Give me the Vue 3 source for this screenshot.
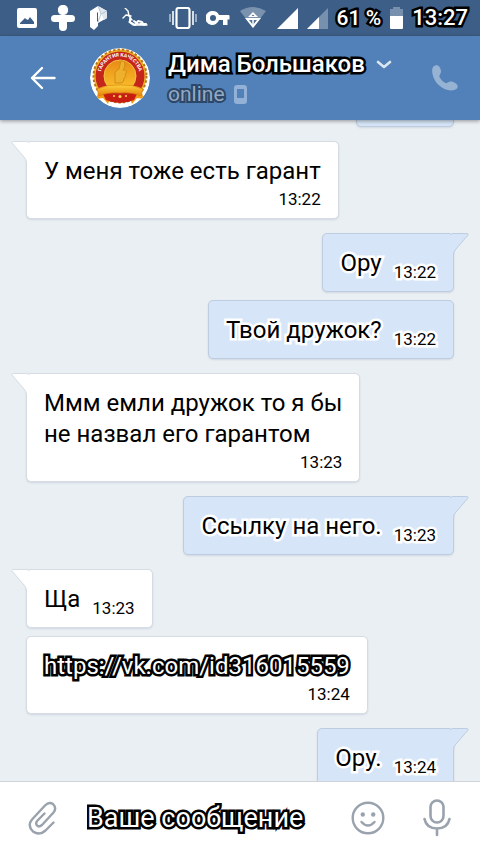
<script setup>
import { ref } from 'vue'

const draft = ref('')

const messages = [
  { id: 2, side: 'in', tail: true, stacked: true, text: 'У меня тоже есть гарант', time: '13:22' },
  { id: 3, side: 'out', tail: true, text: 'Ору', time: '13:22' },
  { id: 4, side: 'out', text: 'Твой дружок?', time: '13:22' },
  { id: 5, side: 'in', tail: true, stacked: true, text: 'Ммм емли дружок то я бы\nне назвал его гарантом', time: '13:23' },
  { id: 6, side: 'out', tail: true, text: 'Ссылку на него.', time: '13:23' },
  { id: 7, side: 'in', tail: true, text: 'Ща', time: '13:23' },
  { id: 8, side: 'in', stacked: true, link: 'https://vk.com/id316015559', time: '13:24' },
  { id: 9, side: 'out', tail: true, text: 'Ору.', time: '13:24' },
]
</script>

<template>
  <div class="page">
    <div class="status">
      <div class="group left">
        <svg width="20" height="20" viewBox="0 0 20 20"><path fill="#fff" fill-rule="evenodd" d="M2 0h16a2 2 0 0 1 2 2v16a2 2 0 0 1-2 2H2a2 2 0 0 1-2-2V2a2 2 0 0 1 2-2zM3 16h14v-2l-4-5-2 3-2-1-1-1-5 5z" /></svg>
        <svg width="24" height="26" viewBox="0 0 24 26"><g fill="#fff"><circle cx="12" cy="5" r="5.500" stroke="#3d5f87" /><rect x="0" y="10" width="24" height="7" rx="3.500" /><path d="M7 10h10v5l-1 2v5a4 4 0 0 1-8 0v-5l-1-2z" /><circle cx="12" cy="5" r="5" /></g></svg>
        <svg width="19" height="24" viewBox="0 0 19 24"><path fill="#fff" d="M1 5l8-5 9 5v7l-9 5v3l-4 4-4-3z" /><path fill="#dfe6ee" d="M9 0l9 5v7l-3 2z" /><path fill="#3d5f87" d="M8 7l1-1v9l-1 1z" /><path d="M9 0l3 8 6-3M12 8l-3 8" stroke="#a6b7cb" stroke-width=".800" fill="none" /></svg>
        <svg width="26" height="20" viewBox="0 0 26 20"><g fill="none" stroke="#fff" stroke-width="2" stroke-linecap="round" stroke-linejoin="round"><path stroke-width="1.400" d="M3 0l3 3 1 5 3 4M1 10l3-3 5 1M25 17H11l-4-3" /><path d="M8 11v3l5 3 3-4 4 1 2 3M12 13l4 3M18 16h6" /></g></svg>
      </div>
      <div class="group right">
        <svg width="28" height="22" viewBox="0 0 28 22"><rect x="7.500" y="1" width="13" height="20" rx="2" fill="none" stroke="#fff" stroke-width="2.200" /><path d="M4 4v14M24 4v14" stroke="#d5dde6" stroke-width="2" /><path d="M1 7v8M27 7v8" stroke="#b1bfcf" stroke-width="1.600" /></svg>
        <svg width="24" height="14" viewBox="0 0 24 14"><path fill="#fff" fill-rule="evenodd" d="M7 0a7 7 0 0 1 6 4h9.500a1 1 0 0 1 1 1v3.500h-2V14H17v-5h-4A7 7 0 1 1 7 0zm0 4a3 3 0 1 0 0 6 3 3 0 0 0 0-6z" /></svg>
        <svg width="28" height="22" viewBox="0 0 28 22"><path fill="#7b92ae" d="M1 4Q14-4 27 4L14 21z" /><path fill="#fff" d="M14 5l5 5H9zM6 11h16l-8 10z" /><path d="M10 13h8l-4 5zM12.500 9l1.500-1.500L15.500 9z" fill="#54728f" /><path d="M14 12v6" stroke="#fff" stroke-width="1.500" /></svg>
        <svg width="22" height="21" viewBox="0 0 22 21"><path fill="#fff" d="M1 21L22 0v21z" /></svg>
        <svg width="21" height="21" viewBox="0 0 21 21"><path fill="#7790ad" d="M0 21L21 0v21z" /><path fill="#fff" d="M0 21L12 9v12z" /></svg>
        <span class="status-text percent">61 %</span>
        <svg width="13" height="22" viewBox="0 0 13 22"><path fill="#7790ad" d="M3 0h7v2h3v8H0V2h3z" /><path fill="#fff" d="M0 9h13v12a1 1 0 0 1-1 1H1a1 1 0 0 1-1-1z" /></svg>
        <span class="status-text">13:27</span>
      </div>
    </div>

    <header class="header">
      <button class="icon-btn back" aria-label="Назад">
        <svg width="26" height="24" viewBox="0 0 26 24"><path d="M24.500 12H2M12 2L2 12l10 10" fill="none" stroke="#fff" stroke-width="2.400" stroke-linecap="round" stroke-linejoin="round" /></svg>
      </button>
      <svg class="avatar" width="60" height="60" viewBox="0 0 60 60">
        <defs>
          <linearGradient id="gold" x1="0" y1="0" x2="0" y2="1"><stop offset="0" stop-color="#e88a14" /><stop offset="1" stop-color="#fbc62e" /></linearGradient>
          <linearGradient id="ribbon" x1="0" y1="0" x2="0" y2="1"><stop offset="0" stop-color="#fbd23c" /><stop offset="1" stop-color="#e8820c" /></linearGradient>
          <path id="arc" d="M10.500 28a19 19 0 0 1 39 0" />
        </defs>
        <circle cx="30" cy="30" r="30" fill="#fff" />
        <circle cx="30" cy="28" r="26.500" fill="#f0b429" stroke="#b8741d" stroke-width="2" stroke-dasharray="2.500 2" />
        <circle cx="30" cy="28" r="24.500" fill="#c4261a" />
        <circle cx="30" cy="28" r="16" fill="url(#gold)" stroke="#f6c044" />
        <path d="M25 24l4-3 2-8c4-1 5 4 2 9h2c2 1 2 3 0 4 1 2 1 3-1 4 0 3-1 5-4 5h-5z" fill="#efb02c" stroke="#cf8d18" stroke-width="1" />
        <text class="seal"><textPath href="#arc" startOffset="50%" text-anchor="middle">ГАРАНТИЯ КАЧЕСТВА</textPath></text>
        <path d="M9 42l-3 9 7-1 5 6 3-8zM51 42l3 9-7-1-5 6-3-8z" fill="#ef9d18" />
        <path d="M12 44q18 6 36 0l-4 8q-14 6-28 0z" fill="#c81e12" />
        <path d="M7 41q11-5 23-4 12-1 23 4l-2 7q-9-4-21-3-12-1-21 3z" fill="url(#ribbon)" stroke="#d9790a" stroke-width=".6" />
        <g fill="#ffd75a"><circle cx="24" cy="48" r="1" /><circle cx="30" cy="48.500" r="1.500" /><circle cx="36" cy="48" r="1" /></g>
      </svg>
      <div class="who">
        <button class="name">
          <span>Дима Большаков</span>
          <svg width="16" height="9" viewBox="0 0 16 9"><path d="M2 2l6 5 6-5" fill="none" stroke="#dce6f1" stroke-width="2.600" stroke-linecap="round" stroke-linejoin="round" /></svg>
        </button>
        <div class="presence">
          <span>online</span>
          <svg width="13" height="19" viewBox="0 0 13 19"><path fill="#93b1d6" fill-rule="evenodd" d="M3 0h7a3 3 0 0 1 3 3v13a3 3 0 0 1-3 3H3a3 3 0 0 1-3-3V3a3 3 0 0 1 3-3zM3 4v9h7V4z" /></svg>
        </div>
      </div>
      <button class="icon-btn" aria-label="Позвонить">
        <svg width="26" height="26" viewBox="0 0 26 26"><path fill="#97b3d4" d="M1 2C3 0 6-.5 7.500 2c1.500 2.500 2 4.500 1 6.500C8 10 7 10.500 7.500 12c1.500 3 3.500 5 6 6 1.500.500 2-.500 3.500-1 3-1 5 0 7.500 2 1.500 1.500 1.500 3 .5 4.500-2 2-6 2.500-9.500 1.500C7.500 22.500 2 16.500.5 9 0 6 0 3.500 1 2z" /></svg>
      </button>
    </header>

    <main class="chat">
      <div class="list">
        <div class="bubble out earlier" aria-hidden="true"></div>
        <div
          v-for="m in messages"
          :key="m.id"
          class="bubble"
          :class="[m.side, { turn: m.tail, stacked: m.stacked }]"
        >
          <svg v-if="m.tail" class="tail" width="17" height="22" viewBox="0 0 17 22">
            <path class="fill" d="M17 .5H1.500Q.5 1 1 2L13 16q2.500 2.500 2.500 6H17z" />
            <path class="edge" d="M17 .5H1.500Q.5 1 1 2L13 16q2.500 2.500 2.500 6" />
          </svg>
          <a v-if="m.link" class="text link" :href="m.link">{{ m.link }}</a>
          <span v-else class="text">{{ m.text }}</span>
          <time class="time">{{ m.time }}</time>
        </div>
      </div>
    </main>

    <footer class="composer">
      <button class="icon-btn" aria-label="Прикрепить">
        <svg width="30" height="34" viewBox="0 0 30 34"><path d="M26.500 21.500l-8 8q-6 5.500-12.500 1-6-6-1-12L18 4.500q4-4 8-1.500 4 4 .5 8.500L15 24q-3 2.500-5 .5-1.800-2.500.5-5l7-7" fill="none" stroke="#99a2ad" stroke-width="2.400" stroke-linecap="round" stroke-linejoin="round" /></svg>
      </button>
      <input v-model="draft" class="field" type="text" placeholder="Ваше сообщение" aria-label="Ваше сообщение" />
      <button class="icon-btn" aria-label="Эмодзи">
        <svg width="34" height="34" viewBox="0 0 34 34"><circle cx="17" cy="17" r="15.300" fill="none" stroke="#99a2ad" stroke-width="2.400" /><g fill="#99a2ad"><circle cx="11.800" cy="13.500" r="2.200" /><circle cx="22.200" cy="13.500" r="2.200" /></g><path d="M10.500 21q6.500 7 13 0" fill="none" stroke="#99a2ad" stroke-width="2.400" stroke-linecap="round" /></svg>
      </button>
      <button class="icon-btn mic" aria-label="Голосовое сообщение">
        <svg width="28" height="38" viewBox="0 0 28 38"><g fill="none" stroke="#99a2ad" stroke-width="2.600" stroke-linecap="round"><rect x="7.500" y="1.500" width="13" height="22" rx="6.500" /><path d="M1.500 20q2 9.500 12.500 9.500T26.500 20M14 30v6" /></g></svg>
      </button>
    </footer>
  </div>
</template>

<style>
body {
  margin: 0;
  background: #eaeff3;
}
</style>

<style scoped>
.page {
  display: flex;
  flex-direction: column;
  height: 100vh;
  overflow: hidden;
  font-family: Roboto, "Noto Sans", sans-serif;
  color: #000;
}
svg {
  display: block;
  flex: none;
}
button {
  margin: 0;
  padding: 0;
  border: 0;
  background: none;
  font: inherit;
  color: inherit;
  cursor: pointer;
}
.status {
  flex: none;
  display: flex;
  align-items: center;
  justify-content: space-between;
  height: 36px;
  padding: 0 12px 0 17px;
  background: #3d5f87;
}
.group {
  display: flex;
  align-items: center;
}
.left {
  gap: 14px;
}
.right {
  gap: 9px;
}
.status-text {
  font-size: 22px;
  line-height: 36px;
  font-weight: 500;
  color: #fff;
  white-space: nowrap;
  -webkit-text-stroke: 5px #000;
  paint-order: stroke fill;
}
.percent {
  font-size: 21px;
}
.header {
  flex: none;
  position: relative;
  z-index: 1;
  display: flex;
  align-items: center;
  height: 84px;
  padding: 0 22px 0 30px;
  background: #5181b8;
  box-shadow: 0 1px 4px rgba(0, 0, 0, 0.4);
}
.icon-btn {
  display: flex;
  flex: none;
}
.avatar {
  margin-left: 34px;
  border-radius: 50%;
}
.seal {
  font-size: 5px;
  font-weight: 700;
  fill: #fff;
}
.who {
  flex: 1;
  min-width: 0;
  padding-left: 18px;
}
.name {
  display: flex;
  align-items: center;
  gap: 11px;
  font-size: 24px;
  line-height: 32px;
  font-weight: 500;
  color: #fff;
  white-space: nowrap;
}
.name span {
  -webkit-text-stroke: 5px #000;
  paint-order: stroke fill;
}
.presence {
  display: flex;
  align-items: center;
  gap: 9px;
  font-size: 21px;
  line-height: 28px;
  color: #94a9c3;
}
.presence span {
  -webkit-text-stroke: 4px #2c4767;
  paint-order: stroke fill;
}
.chat {
  flex: 1;
  min-height: 0;
  overflow: hidden;
  background: #eaeff3;
}
.list {
  display: flex;
  flex-direction: column;
  align-items: flex-start;
  margin-top: -22px;
  padding: 0 26px;
}
.bubble {
  position: relative;
  box-sizing: border-box;
  display: flex;
  align-items: flex-end;
  gap: 12px;
  margin-top: 8px;
  padding: 14px 17px 9px;
  border: 1px solid #d6dce3;
  border-radius: 5px;
  background: #fff;
  box-shadow: 0 1px 2px rgba(60, 80, 110, 0.14);
}
.earlier {
  width: 98px;
  height: 29px;
  margin-top: 0;
}
.turn {
  margin-top: 14px;
}
.stacked {
  flex-direction: column;
  gap: 2px;
}
.out {
  align-self: flex-end;
  background: #d6e6f8;
  border-color: #bdcce0;
}
.tail {
  position: absolute;
  top: -1px;
  left: -16px;
}
.out .tail {
  left: auto;
  right: -16px;
  transform: scaleX(-1);
}
.fill {
  fill: #fff;
}
.edge {
  fill: none;
  stroke: #d6dce3;
}
.out .fill {
  fill: #d6e6f8;
}
.out .edge {
  stroke: #bdcce0;
}
.text {
  align-self: flex-start;
  padding-bottom: 3px;
  font-size: 24px;
  line-height: 31px;
  white-space: pre-line;
}
.stacked .text {
  padding-bottom: 0;
}
.time {
  font-size: 17px;
  line-height: 20px;
}
.out .text,
.out .time {
  -webkit-text-stroke: 5px #fff;
  paint-order: stroke fill;
}
.link {
  color: #fff;
  text-decoration: none;
  -webkit-text-stroke: 5px #000;
  paint-order: stroke fill;
}
.composer {
  flex: none;
  position: relative;
  display: flex;
  align-items: center;
  box-sizing: border-box;
  height: 73px;
  padding: 0 29px 0 27px;
  border-top: 1px solid #cfd4da;
  background: #fff;
}
.field {
  flex: 1;
  min-width: 0;
  height: 48px;
  margin: 0;
  padding: 0 8px 0 30px;
  border: 0;
  outline: 0;
  background: none;
  font-family: inherit;
  font-size: 27px;
  color: #000;
}
.field::placeholder {
  color: #fff;
  opacity: 1;
  -webkit-text-stroke: 5px #000;
  paint-order: stroke fill;
}
.mic {
  margin-left: 38px;
}
</style>
